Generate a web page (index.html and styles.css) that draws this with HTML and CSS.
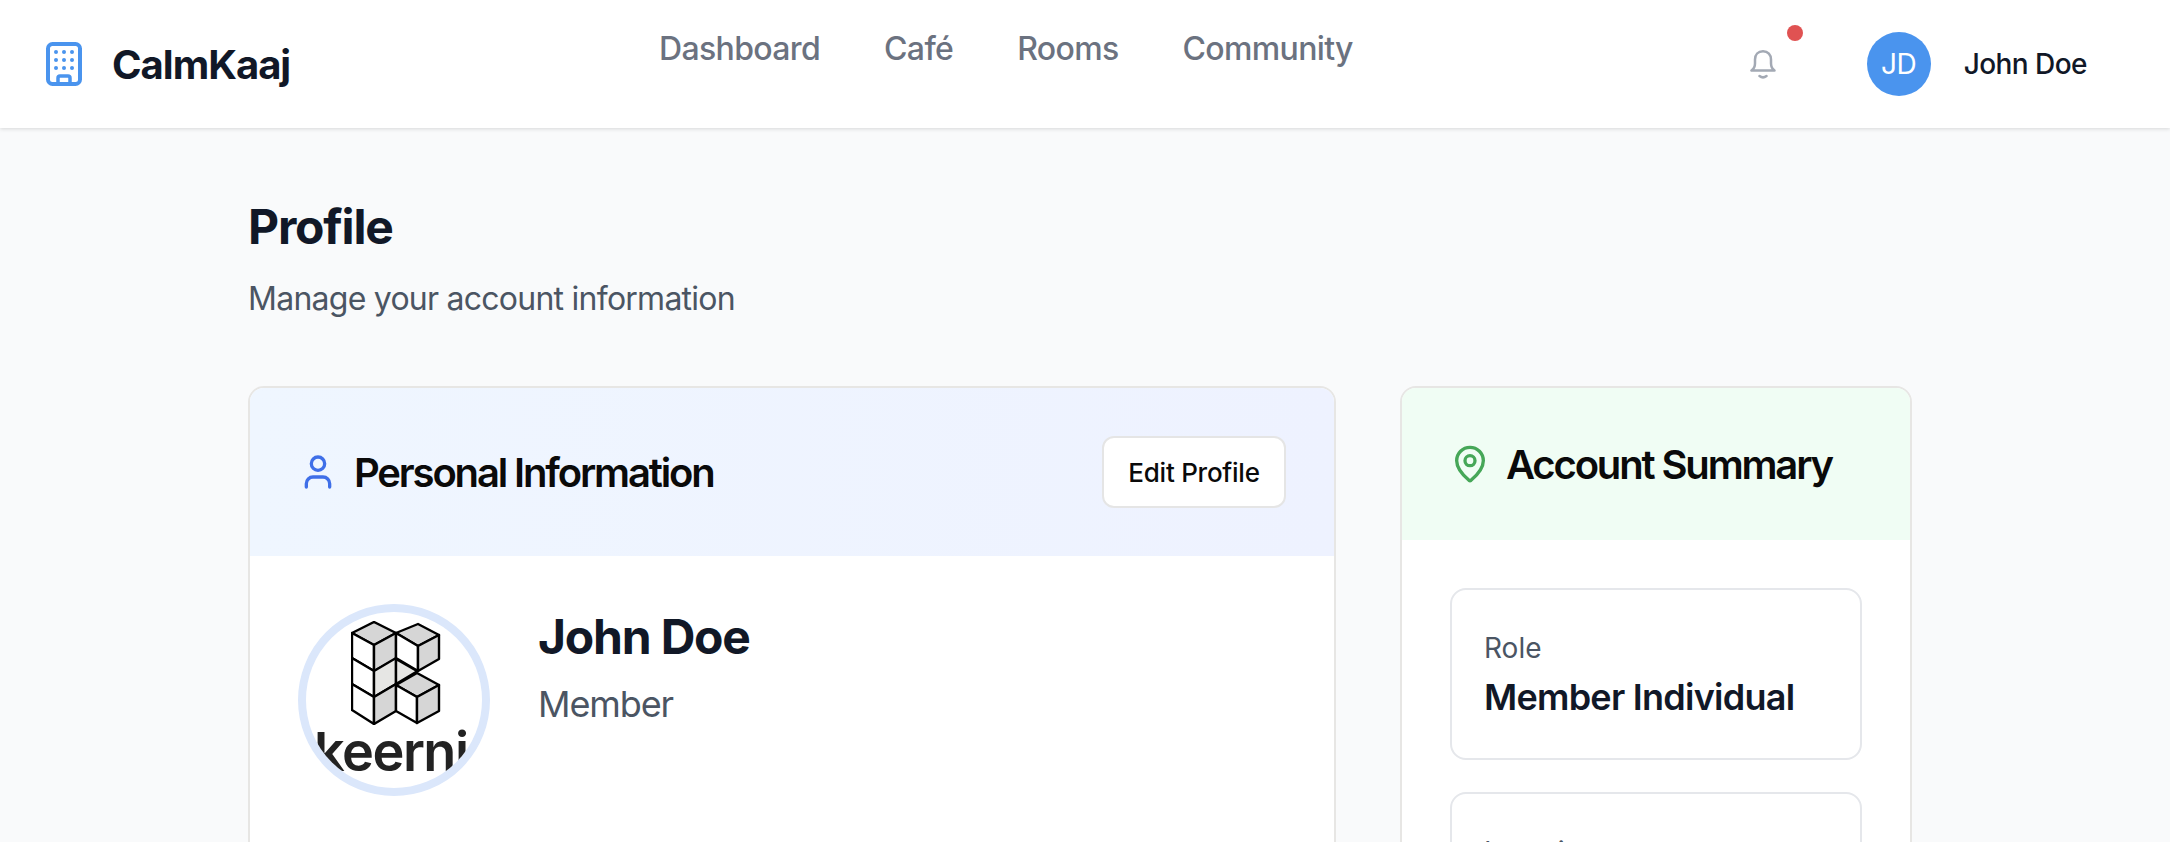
FILE: index.html
```html
<!DOCTYPE html>
<html lang="en">
<head>
<meta charset="utf-8">
<title>CalmKaaj Profile</title>
<link rel="stylesheet" href="styles.css">
</head>
<body>
<header class="topbar">
  <a class="brand">
    <svg class="brand-icon" viewBox="0 0 36 44" aria-hidden="true">
      <rect x="2" y="2" width="32" height="40" rx="4.500" fill="none" stroke="#4a94ee" stroke-width="4"/>
      <g fill="#4a94ee"><circle cx="10" cy="10" r="2"/><circle cx="18" cy="10" r="2"/><circle cx="26" cy="10" r="2"/><circle cx="10" cy="18" r="2"/><circle cx="18" cy="18" r="2"/><circle cx="26" cy="18" r="2"/><circle cx="10" cy="26" r="2"/><circle cx="18" cy="26" r="2"/><circle cx="26" cy="26" r="2"/></g>
      <path d="M12 42v-6a2 2 0 0 1 2-2h8a2 2 0 0 1 2 2v6" fill="none" stroke="#4a94ee" stroke-width="3.500"/>
    </svg>
    <span class="brand-name">CalmKaaj</span>
  </a>
  <nav class="nav">
    <a>Dashboard</a><a>Café</a><a>Rooms</a><a>Community</a>
  </nav>
  <div class="tools">
    <button class="bell">
      <svg viewBox="0 0 26 29" class="bell-icon" aria-hidden="true"><path d="M1.500 20.500h23c-2-1.500-3.500-3.500-3.500-7V9.500C21 4.500 18 1.300 13 1.300S5 4.500 5 9.500v4c0 3.500-1.500 5.500-3.500 7Z" fill="none" stroke="#a3a9b4" stroke-width="2.500" stroke-linejoin="round"/><path d="M9.500 26c2.300 1.800 4.700 1.800 7 0" fill="none" stroke="#a3a9b4" stroke-width="2.500" stroke-linecap="round"/></svg>
      <span class="dot"></span>
    </button>
    <div class="avatar-small">JD</div>
    <span class="user-name">John Doe</span>
  </div>
</header>
<main class="page">
  <h1 class="page-title">Profile</h1>
  <p class="page-sub">Manage your account information</p>
  <div class="columns">
    <section class="card">
      <div class="card-head head-blue">
        <h2 class="card-title">
          <svg class="card-ico" viewBox="0 0 24 24" fill="none" stroke="#3f6fe8" stroke-width="2" stroke-linecap="round" stroke-linejoin="round" aria-hidden="true"><path d="M19 21v-2a4 4 0 0 0-4-4H9a4 4 0 0 0-4 4v2"/><circle cx="12" cy="7" r="4"/></svg>
          <span class="card-title-text">Personal Information</span>
        </h2>
        <button class="edit-btn">Edit Profile</button>
      </div>
      <div class="card-body profile">
        <div class="avatar-big">
          <svg class="cubes" viewBox="0 0 90 104" aria-hidden="true">
            <g stroke="#000" stroke-width="2.400" stroke-linejoin="round">
              <path d="M1 12 23 1l22 11-22 12Z" fill="#d6d6d6"/>
              <path d="M1 12v25l22 13V24Z" fill="#fff"/>
              <path d="M23 24v26l22-12V12Z" fill="#d6d6d6"/>
              <path d="M1 37v26l22 13V50Z" fill="#fff"/>
              <path d="M23 50v26l22-13V37Z" fill="#e6e6e4"/>
              <path d="M1 63v26l22 14V76Z" fill="#fff"/>
              <path d="M23 76v27l22-13V63Z" fill="#d6d6d6"/>
              <path d="M45 12 67 3l21 11-21 11Z" fill="#d6d6d6"/>
              <path d="M45 12v25l22 13V25Z" fill="#fff"/>
              <path d="M67 25v25l21-12V14Z" fill="#d6d6d6"/>
              <path d="M45 38v25l20-12 1-1-21-12Z" fill="#e6e6e4"/>
              <path d="M45 64l21-12 22 12-22 12Z" fill="#d6d6d6"/>
              <path d="M45 64v26l21 12V76Z" fill="#fff"/>
              <path d="M66 76v26l22-12V64Z" fill="#d6d6d6"/>
            </g>
          </svg>
          <span class="keerni">keerni</span>
        </div>
        <div class="who">
          <div class="who-name">John Doe</div>
          <div class="who-role">Member</div>
        </div>
      </div>
    </section>
    <aside class="card">
      <div class="card-head head-green">
        <h2 class="card-title">
          <svg class="card-ico" viewBox="0 0 24 24" fill="none" stroke="#46a758" stroke-width="2" stroke-linecap="round" stroke-linejoin="round" aria-hidden="true"><path d="M20 10c0 4.993-5.539 10.193-7.399 11.799a1 1 0 0 1-1.202 0C9.539 20.193 4 14.993 4 10a8 8 0 0 1 16 0"/><circle cx="12" cy="10" r="3"/></svg>
          <span class="card-title-text">Account Summary</span>
        </h2>
      </div>
      <div class="card-body summary">
        <div class="stat"><div class="stat-label">Role</div><div class="stat-value">Member Individual</div></div>
        <div class="stat"><div class="stat-label">Location</div></div>
      </div>
    </aside>
  </div>
</main>
</body>
</html>
```

FILE: styles.css
```css
* { box-sizing: border-box; }
html, body { margin: 0; height: 100%; overflow: hidden; }
body { background: #f9fafb; color: #111827; font-family: Inter, "Liberation Sans", sans-serif; }
.topbar { height: 128px; background: #fff; box-shadow: 0 1px 4px rgba(0,0,0,.14); display: grid; grid-template-columns: 613px auto 1fr; padding: 0 83px 0 46px; position: relative; }
.brand { display: flex; align-items: center; gap: 30px; height: 128px; }
.brand-icon { width: 36px; height: 44px; display: block; }
.brand-name { font-size: 40px; font-weight: 700; letter-spacing: -1px; }
.nav { display: flex; gap: 64px; padding-top: 29px; font-size: 32px; font-weight: 500; color: #6b7280; line-height: 40px; letter-spacing: -0.65px; }
.tools { display: flex; align-items: center; justify-content: flex-end; }
.bell { position: relative; border: 0; background: none; padding: 0; width: 26px; height: 29px; margin-right: 91px; }
.bell-icon { width: 26px; height: 29px; display: block; }
.dot { position: absolute; width: 16px; height: 16px; border-radius: 50%; background: #e05252; right: -27px; top: -25px; }
.avatar-small { width: 64px; height: 64px; border-radius: 50%; background: #4a94ee; color: #fff; font-size: 28px; letter-spacing: -0.5px; display: flex; align-items: center; justify-content: center; margin-right: 33px; }
.user-name { font-size: 28px; font-weight: 500; letter-spacing: -0.55px; }
.page { width: 1664px; margin-left: 248px; padding-top: 69px; }
.page-title { font-size: 48px; font-weight: 700; line-height: 60px; margin: 0; letter-spacing: -1.2px; }
.page-sub { font-size: 32px; line-height: 40px; margin: 22px 0 67px; color: #4b5563; letter-spacing: -0.75px; }
.columns { display: grid; grid-template-columns: 1088px 512px; gap: 64px; }
.card { background: #fff; border: 2px solid #e7e6e4; border-radius: 16px; overflow: hidden; }
.card-head { display: flex; align-items: center; justify-content: space-between; padding: 48px; }
.head-blue { background: linear-gradient(90deg, #eff6ff, #eef2ff); height: 168px; }
.head-green { background: #f0fdf4; height: 152px; }
.card-title { display: flex; align-items: center; gap: 16px; margin: 0; font-size: 40px; font-weight: 600; line-height: 48px; color: #0a0a0a; letter-spacing: -2.15px; }
.card-title-text { margin-top: 2px; }
.card-ico { width: 40px; height: 40px; flex: none; }
.edit-btn { width: 184px; height: 72px; background: #fff; border: 2px solid #e5e5e5; border-radius: 12px; font: 500 26px Inter, sans-serif; letter-spacing: -0.25px; color: #0a0a0a; }
.card-body { padding: 48px; }
.profile { display: flex; gap: 48px; height: 600px; }
.avatar-big { width: 192px; height: 192px; border-radius: 50%; border: 8px solid #dbe7fb; background: #fff; overflow: hidden; position: relative; flex: none; }
.cubes { position: absolute; left: 45px; top: 9px; width: 90px; height: 104px; display: block; }
.keerni { position: absolute; left: 8px; top: 110px; font-size: 54px; line-height: 60px; font-weight: 600; letter-spacing: -1.5px; color: #222; }
.who { padding-top: 3px; }
.who-name { font-size: 48px; font-weight: 700; line-height: 60px; letter-spacing: -1.2px; }
.who-role { font-size: 36px; line-height: 40px; margin-top: 17px; color: #4b5563; letter-spacing: -1.1px; }
.summary { display: flex; flex-direction: column; gap: 32px; }
.stat { height: 172px; border: 2px solid #e5e7eb; border-radius: 16px; padding: 38px 32px 0; }
.stat-label { font-size: 28px; line-height: 40px; color: #4b5563; }
.stat-value { font-size: 36px; font-weight: 600; line-height: 48px; margin-top: 5px; letter-spacing: -0.75px; }
```
